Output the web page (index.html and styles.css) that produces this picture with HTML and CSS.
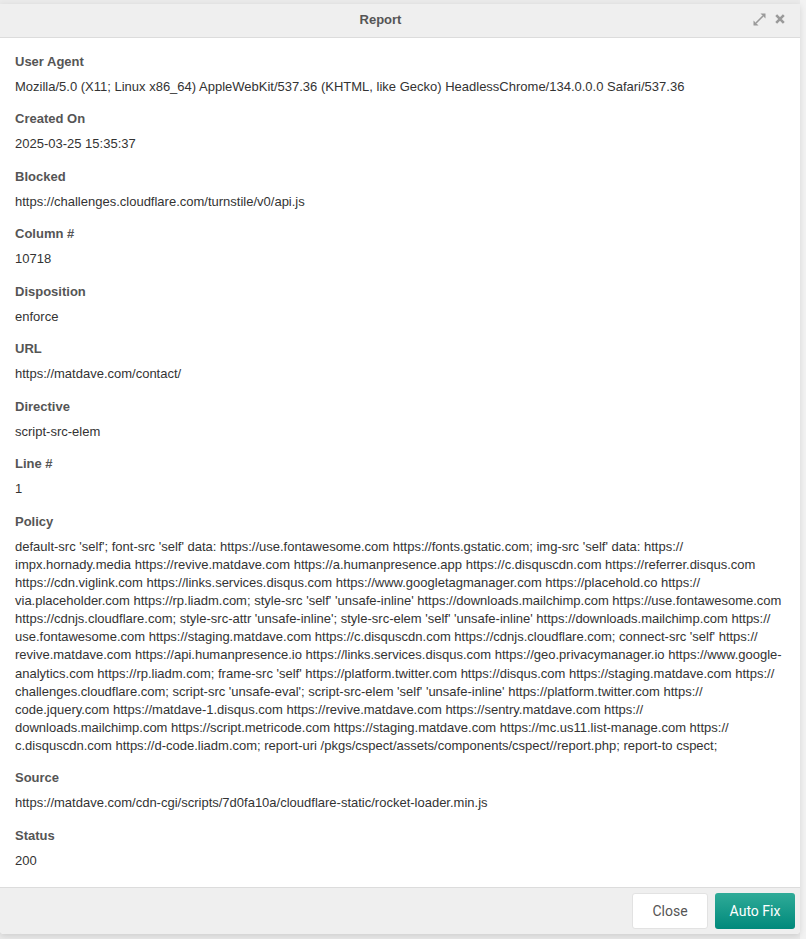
FILE: index.html
```html
<!DOCTYPE html>
<html lang="en">
<head>
<meta charset="utf-8">
<title>Report</title>
<link rel="stylesheet" href="styles.css">
</head>
<body>
<div class="backdrop">
  <div class="modal">
    <div class="modal-header">
      <div class="modal-title">Report</div>
      <div class="modal-tools">
        <svg class="tool-icon" width="13" height="13" viewBox="0 0 13 13" aria-hidden="true">
          <path d="M3 10 L10 3" stroke="#9a9a9a" stroke-width="1.6" fill="none"/>
          <path d="M0.5 12.5 L0.5 7.5 L5.5 12.5 Z" fill="#9a9a9a"/>
          <path d="M12.5 0.5 L12.5 5.5 L7.5 0.5 Z" fill="#9a9a9a"/>
        </svg>
        <svg class="tool-icon" width="10" height="10" viewBox="0 0 10 10" aria-hidden="true">
          <path d="M1.2 1.2 L8.8 8.8 M8.8 1.2 L1.2 8.8" stroke="#9a9a9a" stroke-width="2.6" fill="none"/>
        </svg>
      </div>
    </div>
    <div class="modal-body">
      <div class="field">
        <div class="field-label">User Agent</div>
        <div class="field-value">Mozilla/5.0 (X11; Linux x86_64) AppleWebKit/537.36 (KHTML, like Gecko) HeadlessChrome/134.0.0.0 Safari/537.36</div>
      </div>
      <div class="field">
        <div class="field-label">Created On</div>
        <div class="field-value">2025-03-25 15:35:37</div>
      </div>
      <div class="field">
        <div class="field-label">Blocked</div>
        <div class="field-value">https://challenges.cloudflare.com/turnstile/v0/api.js</div>
      </div>
      <div class="field">
        <div class="field-label">Column #</div>
        <div class="field-value">10718</div>
      </div>
      <div class="field">
        <div class="field-label">Disposition</div>
        <div class="field-value">enforce</div>
      </div>
      <div class="field">
        <div class="field-label">URL</div>
        <div class="field-value">https://matdave.com/contact/</div>
      </div>
      <div class="field">
        <div class="field-label">Directive</div>
        <div class="field-value">script-src-elem</div>
      </div>
      <div class="field">
        <div class="field-label">Line #</div>
        <div class="field-value">1</div>
      </div>
      <div class="field">
        <div class="field-label">Policy</div>
        <div class="field-value">default-src 'self'; font-src 'self' data: https://&#8203;use.fontawesome.com https://&#8203;fonts.gstatic.com; img-src 'self' data: https://&#8203;impx.hornady.media https://&#8203;revive.matdave.com https://&#8203;a.humanpresence.app https://&#8203;c.disquscdn.com https://&#8203;referrer.disqus.com https://&#8203;cdn.viglink.com https://&#8203;links.services.disqus.com https://&#8203;www.googletagmanager.com https://&#8203;placehold.co https://&#8203;via.placeholder.com https://&#8203;rp.liadm.com; style-src 'self' 'unsafe-inline' https://&#8203;downloads.mailchimp.com https://&#8203;use.fontawesome.com https://&#8203;cdnjs.cloudflare.com; style-src-attr 'unsafe-inline'; style-src-elem 'self' 'unsafe-inline' https://&#8203;downloads.mailchimp.com https://&#8203;use.fontawesome.com https://&#8203;staging.matdave.com https://&#8203;c.disquscdn.com https://&#8203;cdnjs.cloudflare.com; connect-src 'self' https://&#8203;revive.matdave.com https://&#8203;api.humanpresence.io https://&#8203;links.services.disqus.com https://&#8203;geo.privacymanager.io https://&#8203;www.google-analytics.com https://&#8203;rp.liadm.com; frame-src 'self' https://&#8203;platform.twitter.com https://&#8203;disqus.com https://&#8203;staging.matdave.com https://&#8203;challenges.cloudflare.com; script-src 'unsafe-eval'; script-src-elem 'self' 'unsafe-inline' https://&#8203;platform.twitter.com https://&#8203;code.jquery.com https://&#8203;matdave-1.disqus.com https://&#8203;revive.matdave.com https://&#8203;sentry.matdave.com https://&#8203;downloads.mailchimp.com https://&#8203;script.metricode.com https://&#8203;staging.matdave.com https://&#8203;mc.us11.list-manage.com https://&#8203;c.disquscdn.com https://&#8203;d-code.liadm.com; report-uri /pkgs/cspect/assets/components/cspect//report.php; report-to cspect;</div>
      </div>
      <div class="field">
        <div class="field-label">Source</div>
        <div class="field-value">https://matdave.com/cdn-cgi/scripts/7d0fa10a/cloudflare-static/rocket-loader.min.js</div>
      </div>
      <div class="field">
        <div class="field-label">Status</div>
        <div class="field-value">200</div>
      </div>
    </div>
    <div class="modal-footer">
      <button class="btn btn-default" type="button">Close</button>
      <button class="btn btn-primary" type="button">Auto Fix</button>
    </div>
  </div>
</div>
</body>
</html>
```

FILE: styles.css
```css
html, body {
  margin: 0;
  padding: 0;
}

body {
  background: #eaeaea;
  font-family: "Liberation Sans", Arial, sans-serif;
  font-size: 13px;
  color: #333;
}

.backdrop {
  padding-top: 4px;
  min-height: 935px;
  background: linear-gradient(to right, transparent 800px, #f2f2f2 800px);
}

.modal {
  width: 800px;
  background: #fff;
  border-radius: 0 0 4px 4px;
  box-shadow: 0 2px 6px rgba(0, 0, 0, 0.12);
}

.modal-header {
  display: flex;
  align-items: center;
  box-sizing: border-box;
  height: 34px;
  padding: 0 15px 3px 0;
  background: #efefef;
  border-bottom: 1px solid #dcdcdc;
}

.modal-title {
  flex: 1;
  text-align: center;
  font-weight: bold;
  color: #555;
  padding-left: 8px;
}

.modal-tools {
  display: flex;
  align-items: center;
  gap: 9px;
}

.tool-icon {
  display: block;
}

.modal-body {
  padding: 15px 15px 2.5px;
}

.field {
  margin-bottom: 14.4px;
}

.field-label {
  font-weight: bold;
  color: #555;
  line-height: 18px;
  margin-bottom: 7px;
}

.field-value {
  line-height: 18.1px;
  color: #333;
}

.modal-footer {
  display: flex;
  justify-content: flex-end;
  gap: 7px;
  padding: 5px 5px 5px;
  background: #efefef;
  border-top: 1px solid #dcdcdc;
  border-radius: 0 0 4px 4px;
}

.btn {
  height: 36px;
  border-radius: 3px;
  font-family: Roboto, "Liberation Sans", sans-serif;
  font-size: 14px;
  cursor: pointer;
}

.btn-default {
  width: 76px;
  background: #fff;
  border: 1px solid #e2e2e2;
  color: #555;
}

.btn-primary {
  width: 80px;
  border: none;
  color: #fff;
  background: linear-gradient(to bottom, #2fab98, #00897b);
}
```
